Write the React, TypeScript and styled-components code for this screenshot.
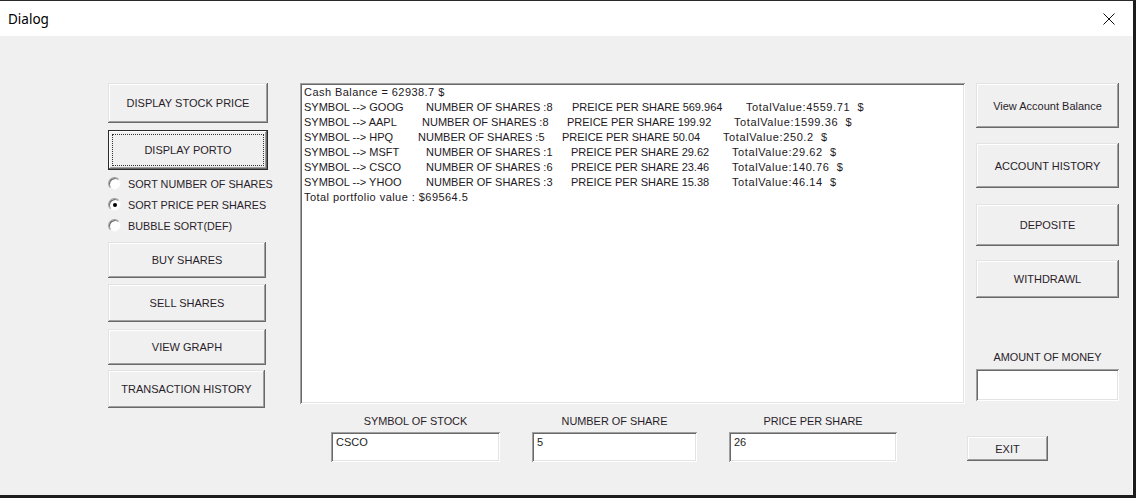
import React from "react";
import styled, { createGlobalStyle } from "styled-components";

const GlobalStyle = createGlobalStyle`
  html, body {
    margin: 0;
    padding: 0;
    background: #f0f0f0;
  }
  body {
    font-family: "Liberation Sans", Arial, sans-serif;
    color: #222;
  }
`;

const Window = styled.div`
  width: 1136px;
  height: 498px;
  box-sizing: border-box;
  display: flex;
  flex-direction: column;
  background: #f0f0f0;
  border-top: 1px solid #2a2a2a;
  border-right: 3px solid #1c1c1c;
  border-bottom: 3px solid #1c1c1c;
`;

const TitleBar = styled.div`
  height: 35px;
  flex: none;
  display: flex;
  align-items: center;
  justify-content: space-between;
  background: #fff;
  padding: 0 0 0 8px;
`;

const Title = styled.span`
  font-family: "Noto Sans", "Open Sans", sans-serif;
  font-size: 13.5px;
  color: #000;
`;

const CloseBox = styled.div`
  width: 46px;
  height: 35px;
  display: flex;
  align-items: center;
  justify-content: center;
  margin-right: 1px;
`;

const Body = styled.div`
  flex: 1;
  display: flex;
  align-items: flex-start;
  padding: 47px 0 0 108px;
  border-right: 1px solid #fafafa;
`;

const LeftCol = styled.div`
  width: 160px;
  display: flex;
  flex-direction: column;
`;

const CenterCol = styled.div`
  width: 665px;
  margin-left: 32px;
  display: flex;
  flex-direction: column;
`;

const RightCol = styled.div`
  width: 154px;
  display: flex;
  flex-direction: column;
`;

const RightStack = styled.div`
  padding-left: 11px;
  display: flex;
  flex-direction: column;
`;

const Button = styled.button<{ $h: number; $gap?: number; $w?: number }>`
  height: ${(p) => p.$h}px;
  width: ${(p) => (p.$w ? `${p.$w}px` : "100%")};
  margin-top: ${(p) => p.$gap ?? 0}px;
  flex: none;
  padding: 0;
  border: none;
  background: #f0f0f0;
  box-shadow: inset -1px -1px #696969, inset 1px 1px #e3e3e3,
    inset -2px -2px #a0a0a0, inset 2px 2px #fff;
  font-family: "Liberation Sans", Arial, sans-serif;
  font-size: 11px;
  color: #2a1d2a;
  text-align: center;
  white-space: nowrap;
`;

const DefaultButton = styled(Button)`
  position: relative;
  box-shadow: inset 0 0 0 1px #2a2a2a, inset -2px -2px #696969,
    inset 2px 2px #fff, inset -3px -3px #a0a0a0;

  &::after {
    content: "";
    position: absolute;
    inset: 4px;
    border: 1px dotted #333;
  }
`;

const RadioList = styled.div`
  margin-top: 3px;
  display: flex;
  flex-direction: column;
`;

const RadioRow = styled.label`
  height: 21px;
  display: flex;
  align-items: center;
  gap: 7px;
  font-size: 10.8px;
  color: #2a1d2a;
  white-space: nowrap;
`;

const RadioDot = styled.span<{ $on?: boolean }>`
  width: 11px;
  height: 11px;
  flex: none;
  border-radius: 50%;
  background: #fff;
  border: 1px solid;
  border-color: #a0a0a0 #f4f4f4 #f4f4f4 #a0a0a0;
  box-shadow: inset 1px 1px #696969;
  display: flex;
  align-items: center;
  justify-content: center;

  &::after {
    content: "";
    width: 4px;
    height: 4px;
    border-radius: 50%;
    background: ${(p) => (p.$on ? "#000" : "transparent")};
  }
`;

const Sunken = styled.div`
  box-sizing: border-box;
  background: #fff;
  box-shadow: inset 1px 1px #a0a0a0, inset -1px -1px #fff,
    inset 2px 2px #696969, inset -2px -2px #e3e3e3;
`;

const TextArea = styled(Sunken)`
  height: 321px;
  padding: 2px 4px;
  font-size: 11px;
  line-height: 15px;
  color: #231823;
`;

const Line = styled.div`
  display: flex;
  white-space: pre;
`;

/* lowercase runs are drawn wider in the original dialog font */
const Segment = styled.span<{ $spacing: number }>`
  display: inline-block;
  flex: none;
  white-space: pre;
  letter-spacing: ${(p) => p.$spacing}px;
`;

const FieldRow = styled.div`
  display: flex;
  gap: 32px;
  padding-left: 31px;
  margin-top: 10px;
`;

const Field = styled.div<{ $w: number }>`
  width: ${(p) => p.$w}px;
  display: flex;
  flex-direction: column;
  align-items: center;
`;

const FieldLabel = styled.span`
  height: 14px;
  line-height: 14px;
  font-size: 10.9px;
  color: #2a1d2a;
  margin-bottom: 4px;
  white-space: nowrap;
`;

const Input = styled(Sunken)<{ $h: number }>`
  width: 100%;
  height: ${(p) => p.$h}px;
  padding: 4px 5px;
  font-size: 11px;
  color: #1e1e1e;
`;

const MoneyLabel = styled(FieldLabel)`
  margin-top: 52px;
  margin-bottom: 5px;
  text-align: center;
`;

const ExitWrap = styled.div`
  margin-top: 35px;
  margin-left: 2px;
`;

type Seg = [number, string];

const lines: Seg[][] = [
  [[0, "Cash Balance = 62938.7 $"]],
  [
    [0, "SYMBOL --> GOOG"],
    [122, "NUMBER OF SHARES :8"],
    [268, "PREICE PER SHARE 569.964"],
    [442, "TotalValue:4559.71  $"],
  ],
  [
    [0, "SYMBOL --> AAPL"],
    [118, "NUMBER OF SHARES :8"],
    [263, "PREICE PER SHARE 199.92"],
    [430, "TotalValue:1599.36  $"],
  ],
  [
    [0, "SYMBOL --> HPQ"],
    [114, "NUMBER OF SHARES :5"],
    [258, "PREICE PER SHARE 50.04"],
    [419, "TotalValue:250.2  $"],
  ],
  [
    [0, "SYMBOL --> MSFT"],
    [122, "NUMBER OF SHARES :1"],
    [267, "PREICE PER SHARE 29.62"],
    [428, "TotalValue:29.62  $"],
  ],
  [
    [0, "SYMBOL --> CSCO"],
    [122, "NUMBER OF SHARES :6"],
    [267, "PREICE PER SHARE 23.46"],
    [428, "TotalValue:140.76  $"],
  ],
  [
    [0, "SYMBOL --> YHOO"],
    [122, "NUMBER OF SHARES :3"],
    [267, "PREICE PER SHARE 15.38"],
    [428, "TotalValue:46.14  $"],
  ],
  [[0, "Total portfolio value : $69564.5"]],
];

const spacingFor = (text: string) => {
  if (text.startsWith("TotalValue")) return 0.6;
  if (/[a-z]/.test(text)) return 0.45;
  return 0;
};

const radios = [
  { label: "SORT NUMBER OF SHARES", on: false },
  { label: "SORT PRICE PER SHARES", on: true },
  { label: "BUBBLE SORT(DEF)", on: false },
];

const fields = [
  { label: "SYMBOL OF STOCK", value: "CSCO", w: 169 },
  { label: "NUMBER OF SHARE", value: "5", w: 165 },
  { label: "PRICE PER SHARE", value: "26", w: 168 },
];

function CloseIcon() {
  return (
    <svg width="12" height="12" viewBox="0 0 12 12">
      <path d="M0.5 0.5 L11.5 11.5 M11.5 0.5 L0.5 11.5" stroke="#111" strokeWidth="1" fill="none" />
    </svg>
  );
}

function PortfolioText() {
  return (
    <TextArea>
      {lines.map((segs, i) => (
        <Line key={i}>
          {segs.map(([x, text], j) => {
            const next = segs[j + 1];
            return (
              <Segment
                key={j}
                $spacing={spacingFor(text)}
                style={next ? { width: next[0] - x } : undefined}
              >
                {text}
              </Segment>
            );
          })}
        </Line>
      ))}
    </TextArea>
  );
}

export default function App() {
  return (
    <>
      <GlobalStyle />
      <Window>
        <TitleBar>
          <Title>Dialog</Title>
          <CloseBox>
            <CloseIcon />
          </CloseBox>
        </TitleBar>
        <Body>
          <LeftCol>
            <Button $h={40}>DISPLAY STOCK PRICE</Button>
            <DefaultButton $h={40} $gap={7}>
              DISPLAY PORTO
            </DefaultButton>
            <RadioList>
              {radios.map((r) => (
                <RadioRow key={r.label}>
                  <RadioDot $on={r.on} />
                  {r.label}
                </RadioRow>
              ))}
            </RadioList>
            <Button $h={36} $gap={6} $w={158}>
              BUY SHARES
            </Button>
            <Button $h={38} $gap={6} $w={158}>
              SELL SHARES
            </Button>
            <Button $h={36} $gap={7} $w={158}>
              VIEW GRAPH
            </Button>
            <Button $h={38} $gap={5} $w={157}>
              TRANSACTION HISTORY
            </Button>
          </LeftCol>

          <CenterCol>
            <PortfolioText />
            <FieldRow>
              {fields.map((f) => (
                <Field key={f.label} $w={f.w}>
                  <FieldLabel>{f.label}</FieldLabel>
                  <Input $h={30}>{f.value}</Input>
                </Field>
              ))}
            </FieldRow>
          </CenterCol>

          <RightCol>
            <RightStack>
              <Button $h={45}>View Account Balance</Button>
              <Button $h={45} $gap={15}>
                ACCOUNT HISTORY
              </Button>
              <Button $h={42} $gap={16}>
                DEPOSITE
              </Button>
              <Button $h={38} $gap={14}>
                WITHDRAWL
              </Button>
              <MoneyLabel>AMOUNT OF MONEY</MoneyLabel>
              <Input $h={32} />
            </RightStack>
            <ExitWrap>
              <Button $h={25} $w={81}>
                EXIT
              </Button>
            </ExitWrap>
          </RightCol>
        </Body>
      </Window>
    </>
  );
}
